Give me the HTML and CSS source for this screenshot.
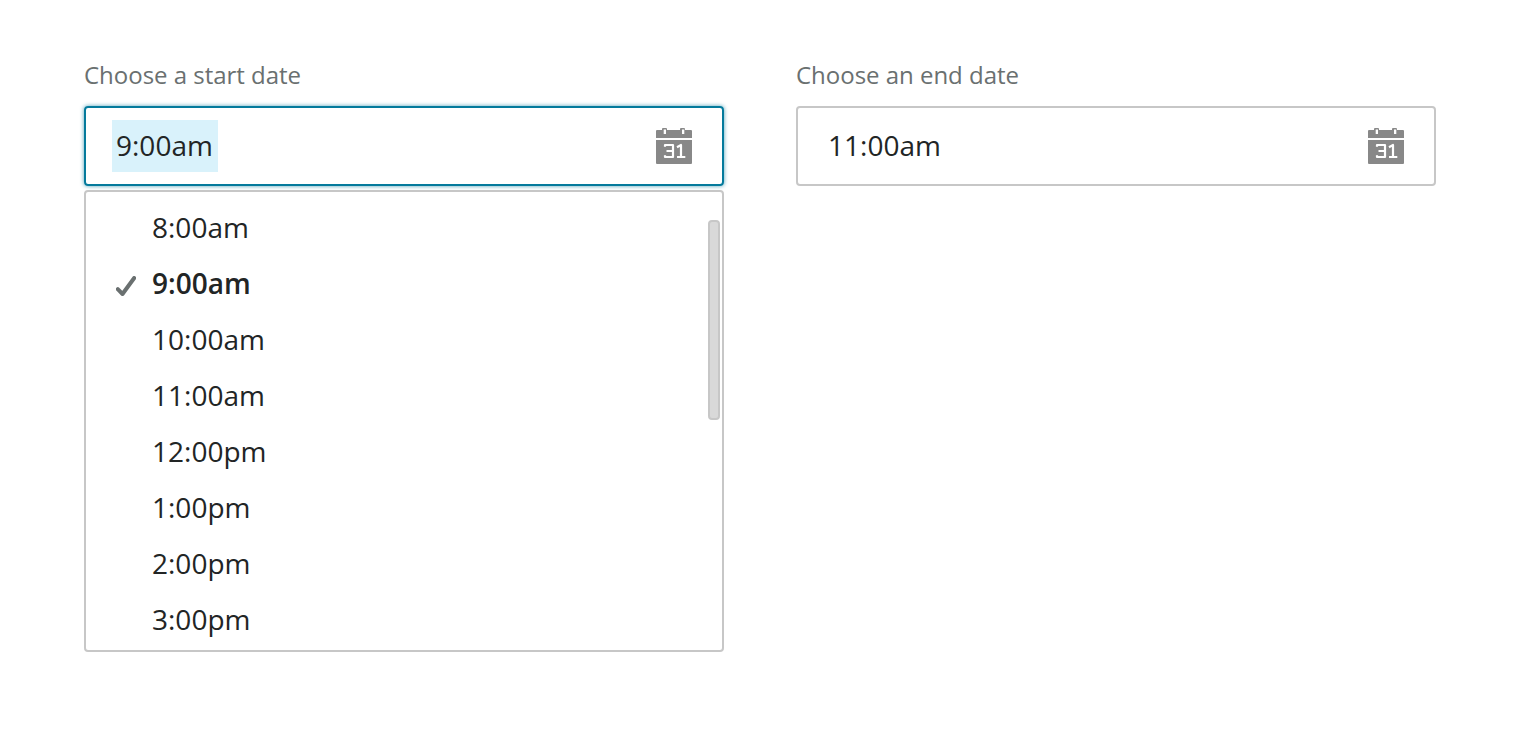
FILE: index.html
```html
<!DOCTYPE html>
<html lang="en">
<head>
<meta charset="utf-8">
<title>Choose dates</title>
<link rel="stylesheet" href="styles.css">
</head>
<body>
<svg class="defs" aria-hidden="true">
  <symbol id="calendar" viewBox="0 0 36 36">
    <path fill="#888" fill-rule="evenodd" d="M1 2H6V1Q6 0 7 0H10Q11 0 11 1V2H24V1Q24 0 25 0H28Q29 0 29 1V2H35Q36 2 36 3V10H0V3Q0 2 1 2ZM7.7 1.5V6H10V1.5ZM26 1.5V6H28.3V1.5Z"/>
    <path fill="#888" d="M0 12H36V35Q36 36 35 36H1Q0 36 0 35Z"/>
    <path fill="none" stroke="#fff" stroke-width="2.2" stroke-linejoin="round" d="M9 18.8V17H17V29H9V27.2M10.5 23H17M21 19.2L25 17V29M21 29H29.3"/>
  </symbol>
</svg>
<main class="dates">
  <section class="field">
    <div class="label">Choose a start date</div>
    <div class="input focused">
      <span class="selected">9:00am</span>
      <svg class="icon"><use href="#calendar"/></svg>
    </div>
    <div class="menu">
      <ul class="options">
        <li>8:00am</li>
        <li class="current"><svg class="check" viewBox="0 0 20 20"><path d="M1.8 13.2L6.5 18L18.2 2"/></svg>9:00am</li>
        <li>10:00am</li>
        <li>11:00am</li>
        <li>12:00pm</li>
        <li>1:00pm</li>
        <li>2:00pm</li>
        <li>3:00pm</li>
      </ul>
      <div class="thumb"></div>
    </div>
  </section>
  <section class="field">
    <div class="label">Choose an end date</div>
    <div class="input">
      <span class="value">11:00am</span>
      <svg class="icon"><use href="#calendar"/></svg>
    </div>
  </section>
</main>
</body>
</html>
```
FILE: styles.css
```css
* { box-sizing: border-box; }
body {
  margin: 0;
  background: #fff;
  color: #222525;
  font: 28px/56px "Open Sans", "Noto Sans", sans-serif;
}
.defs { position: absolute; width: 0; height: 0; }
.dates {
  display: grid;
  grid-template-columns: 640px 640px;
  gap: 72px;
  padding: 56px 84px 0;
}
.label {
  height: 50px;
  line-height: 38px;
  font-size: 24px;
  letter-spacing: -0.02px;
  color: #6a7070;
}
.input {
  display: flex;
  align-items: center;
  justify-content: space-between;
  height: 80px;
  padding: 0 30px;
  border: 2px solid #c7c7c7;
  border-radius: 4px;
}
.focused {
  border-color: #047a9c;
  box-shadow: 0 0 4px rgba(4, 122, 156, 0.7);
}
.selected,
.value {
  height: 52px;
  line-height: 50px;
}
.selected {
  margin-left: -4px;
  padding: 0 5px 0 4px;
  background: #d9f2fb;
}
.icon { width: 36px; height: 36px; }
.menu {
  display: flex;
  justify-content: space-between;
  height: 462px;
  margin-top: 4px;
  padding: 8px 2px 0 0;
  border: 2px solid #c7c7c7;
  border-radius: 4px;
}
.options {
  margin: 0;
  padding: 0 0 0 66px;
  list-style: none;
}
.options li { height: 56px; line-height: 54px; }
.current { position: relative; font-weight: 600; }
.check {
  position: absolute;
  left: -36px;
  top: 20px;
  width: 20px;
  height: 20px;
  fill: none;
  stroke: #6a7070;
  stroke-width: 4;
  stroke-linecap: round;
  stroke-linejoin: round;
}
.thumb {
  width: 12px;
  height: 200px;
  margin-top: 20px;
  border: 2px solid #c7c7c7;
  border-radius: 4px;
  background: #d9d9d9;
}
```
